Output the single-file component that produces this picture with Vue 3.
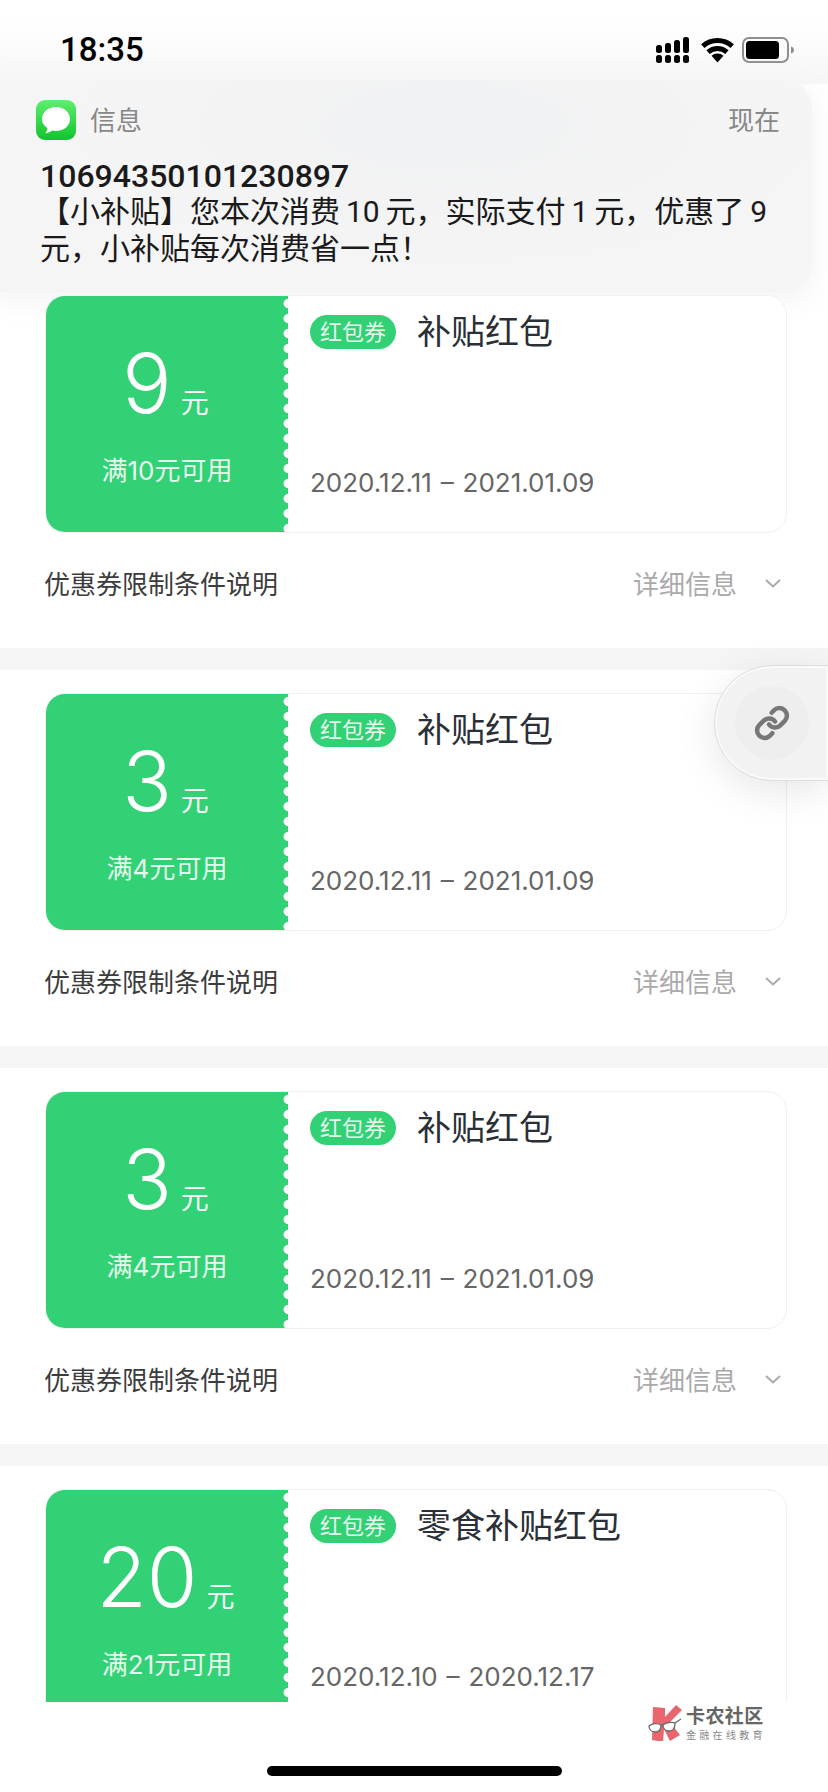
<script setup>
const coupons = [
  { amount: '9', cond: '满10元可用', title: '补贴红包', date: '2020.12.11 – 2021.01.09', rule: true },
  { amount: '3', cond: '满4元可用', title: '补贴红包', date: '2020.12.11 – 2021.01.09', rule: true },
  { amount: '3', cond: '满4元可用', title: '补贴红包', date: '2020.12.11 – 2021.01.09', rule: true },
  { amount: '20', cond: '满21元可用', title: '零食补贴红包', date: '2020.12.10 – 2020.12.17', rule: false }
]
const signalBars = [
  { x: 0, y: 8, h: 8 }, { x: 9, y: 6, h: 10 }, { x: 18, y: 3, h: 13 }, { x: 27, y: 0, h: 16 }
]
</script>

<template>
  <div class="screen">
    <main class="list">
      <section v-for="(c, i) in coupons" :key="i" class="section">
        <div class="card">
          <div class="money">
            <div class="amount"><span class="num">{{ c.amount }}</span><span class="unit">元</span></div>
            <div class="cond">{{ c.cond }}</div>
            <div class="scallop"></div>
          </div>
          <div class="info">
            <div class="head">
              <span class="pill">红包券</span>
              <span class="title">{{ c.title }}</span>
            </div>
            <div class="date">{{ c.date }}</div>
          </div>
        </div>
        <div v-if="c.rule" class="row">
          <span class="rule">优惠券限制条件说明</span>
          <span class="more">详细信息</span>
          <svg class="chev" width="16" height="9" viewBox="0 0 16 9"><path d="M1 1l7 6.5L15 1" fill="none" stroke="#aaa" stroke-width="2"/></svg>
        </div>
      </section>
    </main>

    <div class="top-fade"></div>
    <header class="status">
      <span class="time">18:35</span>
      <div class="status-icons">
        <svg width="33" height="26" viewBox="0 0 33 26">
          <rect v-for="b in signalBars" :key="b.x" :x="b.x" :y="b.y" width="6" :height="b.h" rx="2.5" fill="#000"/>
          <rect v-for="b in signalBars" :key="'d' + b.x" :x="b.x" y="18" width="6" height="8" rx="2.5" fill="#000"/>
        </svg>
        <svg class="wifi" width="33" height="25" viewBox="0 0 33 25">
          <path d="M1.800 8.200A22 22 0 0 1 31.200 8.200" fill="none" stroke="#000" stroke-width="5"/>
          <path d="M7.100 14.100A14 14 0 0 1 25.900 14.100" fill="none" stroke="#000" stroke-width="5"/>
          <path d="M16.500 24.500L10.500 17.800A9 9 0 0 1 22.500 17.800z" fill="#000"/>
        </svg>
        <svg class="batt" width="52" height="26" viewBox="0 0 52 26">
          <rect x="1" y="1" width="45" height="24" rx="6" fill="none" stroke="#8e8e8e" stroke-width="2"/>
          <rect x="4" y="4" width="33" height="18" rx="3.500" fill="#000"/>
          <path d="M49 9.500c2 .5 3 2 3 3.500s-1 3-3 3.500z" fill="#8e8e8e"/>
        </svg>
      </div>
    </header>

    <aside class="notice">
      <div class="notice-head">
        <svg class="msg" width="40" height="40" viewBox="0 0 40 40">
          <defs>
            <linearGradient id="msgGrad" x1="0" y1="0" x2="0" y2="1">
              <stop offset="0" stop-color="#5fee6f"/>
              <stop offset="1" stop-color="#10c42c"/>
            </linearGradient>
          </defs>
          <rect width="40" height="40" rx="9" fill="url(#msgGrad)"/>
          <path d="M20 7c8 0 14 5 14 12s-6 12-14 12c-1.500 0-2.800-.2-4-.5-1.500 1.500-4 2.500-7 2.700 1.500-1.300 2.300-3 2.500-5C7.900 25.900 6 22.700 6 19 6 12 12 7 20 7z" fill="#fff"/>
        </svg>
        <span class="app">信息</span>
        <span class="now">现在</span>
      </div>
      <div class="sender">10694350101230897</div>
      <p class="body">【小补贴】您本次消费 10 元，实际支付 1 元，优惠了 9 元，小补贴每次消费省一点！</p>
    </aside>

    <div class="float-btn">
      <div class="float-circle">
        <svg width="36" height="36" viewBox="0 0 24 24" fill="none" stroke="#777" stroke-width="3" stroke-linecap="round" stroke-linejoin="round">
          <path d="M10 13a5 5 0 0 0 7.540.54l3-3a5 5 0 0 0-7.070-7.070l-1.720 1.710"/>
          <path d="M14 11a5 5 0 0 0-7.540-.54l-3 3a5 5 0 0 0 7.070 7.070l1.710-1.710"/>
        </svg>
      </div>
    </div>

    <footer class="bottom">
      <div class="mark">
        <svg width="36" height="36" viewBox="0 0 36 36">
          <path d="M5 2l12 1v9L28 0l6 5-12 12 10 13-10 6-6-12-1 13-11-2z" fill="#e9666f"/>
          <path d="M1 21c3-3 9-3 12-1 0 4-2 7-6 7-4 0-6-3-6-6z" fill="#fff" stroke="#6a6a6a" stroke-width="1.300"/>
          <path d="M15 20c3-3 9-3 12-2 0 5-2 8-6 8-4 0-6-3-6-6z" fill="#fff" stroke="#6a6a6a" stroke-width="1.300"/>
          <path d="M13 20l2 0M27 18l6-4" stroke="#6a6a6a" stroke-width="1.300" fill="none"/>
        </svg>
        <div class="mark-text">
          <div class="mark-name">卡农社区</div>
          <div class="mark-sub">金融在线教育</div>
        </div>
      </div>
      <div class="home-bar"></div>
    </footer>
  </div>
</template>

<style scoped>
.screen {
  position: relative;
  width: 828px;
  height: 1792px;
  overflow: hidden;
  background: #fff;
  font-family: Inter, "Noto Sans CJK SC", sans-serif;
}
.list { padding-top: 272px; }
.section {
  padding: 23px 41px 13px 45px;
  background: #fff;
  border-bottom: 22px solid #f5f5f5;
}
.card {
  position: relative;
  z-index: 2;
  display: flex;
  height: 238px;
  box-sizing: border-box;
  border: 1px solid #f0f0f0;
  border-radius: 20px;
  overflow: hidden;
  background: #fff;
}
.money {
  position: relative;
  width: 242px;
  flex: none;
  box-sizing: border-box;
  padding-top: 48px;
  background: #32d175;
  color: #fff;
  text-align: center;
}
.amount {
  display: flex;
  justify-content: center;
  align-items: baseline;
  gap: 9px;
  height: 80px;
  padding-right: 3px;
  line-height: 80px;
}
.num { font-size: 82px; font-weight: 300; }
.unit { font-size: 28px; opacity: .95; }
.cond { margin-top: 32px; font-size: 26px; line-height: 30px; opacity: .88; }
.scallop {
  position: absolute;
  top: 0;
  right: 0;
  bottom: 0;
  width: 5px;
  background: radial-gradient(circle at 100% 50%, #fff 4.2px, transparent 4.8px) 0 0 / 5px 15px repeat-y;
}
.info {
  flex: 1;
  display: flex;
  flex-direction: column;
  justify-content: space-between;
  padding: 17px 22px 33px;
}
.head { display: flex; align-items: center; gap: 21px; height: 38px; }
.pill {
  width: 86px;
  height: 34px;
  border-radius: 17px;
  background: #32d175;
  color: rgba(255, 255, 255, .9);
  font-size: 22px;
  line-height: 34px;
  text-align: center;
}
.title { font-size: 34px; line-height: 38px; color: #2b2f36; }
.date { font-size: 26px; line-height: 32px; color: #666; word-spacing: 1.500px; }
.row {
  display: flex;
  align-items: center;
  height: 98px;
  padding-bottom: 4px;
  margin-left: -1px;
  font-size: 26px;
}
.rule { flex: 1; color: #3c3c3c; }
.more { color: #aaa; }
.chev { margin: 3px 6px 0 28px; }
.top-fade {
  position: absolute;
  inset: 0 0 auto 0;
  height: 84px;
  background: linear-gradient(#fff 20%, #f6f6f7);
}
.status {
  position: absolute;
  top: 37px;
  left: 60px;
  right: 34px;
  display: flex;
  justify-content: space-between;
  align-items: center;
  height: 26px;
}
.time { font-size: 33px; font-weight: 500; color: #000; font-family: Roboto, sans-serif; margin-top: -2px; }
.status-icons { display: flex; align-items: center; }
.wifi { margin: 0 8px 0 12px; }
.notice {
  position: absolute;
  z-index: 1;
  top: 80px;
  left: 0;
  width: 812px;
  height: 212px;
  box-sizing: border-box;
  padding: 20px 32px 0 40px;
  border-radius: 0 28px 28px 0;
  background: radial-gradient(ellipse at 55% 22%, #f0f1f2, #f5f5f6 62%);
  box-shadow: 0 6px 22px 6px rgba(246, 246, 247, .95);
}
.notice-head { display: flex; align-items: center; height: 40px; margin-left: -4px; }
.app { margin-left: 14px; margin-bottom: 4px; flex: 1; font-size: 26px; color: #888; }
.now { margin-bottom: 4px; font-size: 26px; color: #888; }
.sender { margin-top: 18px; font-size: 32px; line-height: 37px; font-weight: 500; color: #1a1a1a; font-family: Roboto, sans-serif; }
.body { margin: -2px 0 0; font-size: 30px; line-height: 37px; color: #1a1a1a; font-family: Roboto, "Noto Sans CJK SC", sans-serif; word-spacing: -1.500px; }
.float-btn {
  position: absolute;
  z-index: 3;
  top: 666px;
  right: 0;
  width: 113px;
  height: 114px;
  box-sizing: border-box;
  display: flex;
  align-items: center;
  padding-left: 18px;
  border: 2px solid #fafafa;
  outline: 1px solid #ddd;
  border-radius: 57px 0 0 57px;
  background: #f2f2f2;
  box-shadow: 0 10px 40px rgba(0, 0, 0, .1);
}
.float-circle {
  width: 74px;
  height: 74px;
  border-radius: 50%;
  background: #eeeeee;
  display: flex;
  align-items: center;
  justify-content: center;
}
.bottom {
  position: absolute;
  z-index: 4;
  left: 0;
  right: 0;
  bottom: 0;
  height: 90px;
  background: #fff;
}
.mark {
  position: absolute;
  top: 3px;
  left: 648px;
  display: flex;
  gap: 2px;
}
.mark-name { margin-top: 2px; font-size: 19px; line-height: 20px; font-weight: 700; color: #666; letter-spacing: .4px; }
.mark-sub { margin-top: 2px; font-size: 10px; line-height: 12px; color: #888; letter-spacing: 3.300px; white-space: nowrap; }
.home-bar {
  position: absolute;
  left: 267px;
  top: 64px;
  width: 295px;
  height: 10px;
  border-radius: 5px;
  background: #000;
}
</style>
